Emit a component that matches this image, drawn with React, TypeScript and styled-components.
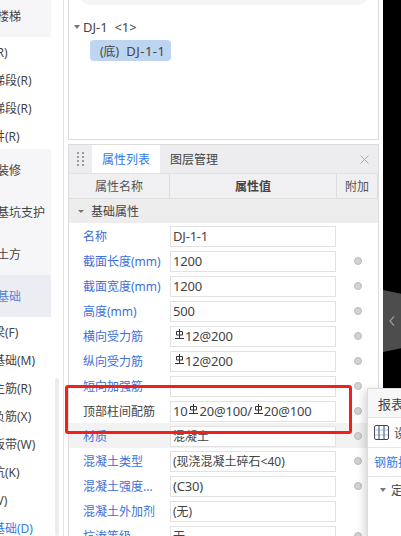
import React from "react";
import styled, { createGlobalStyle } from "styled-components";

const Global = createGlobalStyle`
  html, body { margin: 0; padding: 0; background: #000; }
  #root { width: 401px; height: 536px; overflow: hidden; }
  * { box-sizing: border-box; }
`;

const FONT = `"Noto Sans", "Noto Sans CJK SC", sans-serif`;

const Page = styled.div`
  position: relative;
  display: flex;
  width: 401px;
  height: 536px;
  overflow: hidden;
  font-family: ${FONT};
  font-size: 12px;
  color: #333;
  background: #000;
`;

const Workspace = styled.div`
  display: flex;
  width: 383px;
  height: 536px;
  background: #fff;
`;

const Sidebar = styled.nav`
  position: relative;
  width: 64px;
  flex: none;
  border-right: 1px solid #e4e4e4;
  overflow: hidden;
`;

const Group = styled.div<{ $h: number; $active?: boolean; $raised?: boolean }>`
  width: 51px;
  height: ${(p) => p.$h}px;
  padding: 0 0 ${(p) => (p.$raised ? 5 : 0)}px 0;
  display: flex;
  align-items: center;
  white-space: nowrap;
  background: ${(p) => (p.$active ? "#ecedf2" : "#f6f6f8")};
  color: ${(p) => (p.$active ? "#4f86dd" : "#444")};
`;

const GroupLabel = styled.span`
  margin-left: -3px;
`;

const SubItem = styled.div<{ $active?: boolean }>`
  height: 28px;
  padding-top: 1px;
  display: flex;
  align-items: center;
  white-space: nowrap;
  color: ${(p) => (p.$active ? "#2f7bea" : "#444")};
`;

const SubLabel = styled.span`
  margin-left: -31px;
`;

const ScrollThumb = styled.div`
  position: absolute;
  left: 55px;
  top: 378px;
  width: 4px;
  height: 158px;
  background: #ececec;
  border-radius: 2px;
`;

const Main = styled.div`
  display: flex;
  flex-direction: column;
  gap: 4px;
  padding-left: 4px;
  width: 319px;
  flex: none;
`;

const TreePanel = styled.section`
  position: relative;
  height: 140px;
  flex: none;
  width: 311px;
  border: 1px solid #dcdcdc;
  border-top: 0;
  padding: 0 0 0 5px;
`;

const TopBar = styled.div`
  position: absolute;
  left: 11px;
  right: 10px;
  top: -10px;
  height: 15px;
  background: #f4f4f4;
  border-radius: 0 0 10px 10px;
`;

const TreeRow = styled.div`
  display: flex;
  align-items: center;
  gap: 3px;
  height: 20px;
  margin-top: 17px;
  font-size: 13px;
  color: #444;
`;

const Caret = styled.span<{ $size?: number }>`
  width: 0;
  height: 0;
  border-left: ${(p) => p.$size ?? 3.5}px solid transparent;
  border-right: ${(p) => p.$size ?? 3.5}px solid transparent;
  border-top: ${(p) => p.$size ?? 4}px solid #777;
  flex: none;
`;

const TreeChip = styled.div`
  margin: 3px 0 0 16px;
  width: 81px;
  height: 21px;
  display: flex;
  align-items: center;
  gap: 7px;
  padding-left: 10px;
  background: #bdd5f0;
  border-radius: 4px;
  color: #444;
  white-space: nowrap;
`;

const ChipCode = styled.span`
  font-size: 13px;
  letter-spacing: 0.5px;
`;

const PropPanel = styled.section`
  flex: 1;
  width: 311px;
  border: 1px solid #dcdcdc;
  border-bottom: 0;
  overflow: hidden;
`;

const TabBar = styled.div`
  height: 29px;
  display: flex;
  align-items: stretch;
  background: #ededef;
  border-bottom: 1px solid #e2e2e2;
`;

const Grip = styled.div`
  width: 23px;
  display: flex;
  align-items: center;
  justify-content: center;
`;

const Tab = styled.div<{ $active?: boolean }>`
  width: 68px;
  height: 28px;
  display: flex;
  align-items: center;
  justify-content: center;
  color: ${(p) => (p.$active ? "#2f7bea" : "#444")};
  background: ${(p) => (p.$active ? "#fff" : "transparent")};
`;

const Spacer = styled.div`
  flex: 1;
`;

const CloseBtn = styled.div`
  width: 28px;
  display: flex;
  align-items: center;
  justify-content: center;
`;

const HeadRow = styled.div`
  display: grid;
  grid-template-columns: 101px 167px 41px;
  height: 25px;
  background: #f0f0f2;
  border-bottom: 1px solid #dfdfdf;
`;

const HeadCell = styled.div<{ $bold?: boolean }>`
  display: flex;
  align-items: center;
  justify-content: center;
  border-right: 1px solid #dcdcdc;
  font-weight: ${(p) => (p.$bold ? 700 : 400)};
  color: ${(p) => (p.$bold ? "#444" : "#555")};
`;

const SectionRow = styled.div`
  height: 24px;
  display: flex;
  align-items: center;
  gap: 7px;
  padding-left: 9px;
  background: #ededed;
  color: #444;
`;

const Row = styled.div<{ $shade?: boolean }>`
  display: grid;
  grid-template-columns: 101px 166px 43px;
  align-items: center;
  height: 25px;
  padding-top: 1px;
  background: ${(p) => (p.$shade ? "#f2f2f2" : "transparent")};
`;

const Label = styled.div<{ $plain?: boolean }>`
  padding-left: 14px;
  color: ${(p) => (p.$plain ? "#444" : "#3d6fd9")};
  white-space: nowrap;
  overflow: hidden;
`;

const Value = styled.div<{ $cjk?: boolean }>`
  height: 21px;
  display: flex;
  align-items: center;
  padding-left: 2px;
  border: 1px solid #e2e2e2;
  background: #fff;
  color: #444;
  font-size: ${(p) => (p.$cjk ? 12 : 13)}px;
  letter-spacing: ${(p) => (p.$cjk ? 0 : -0.2)}px;
  white-space: nowrap;
  overflow: hidden;
`;

const Radio = styled.span`
  justify-self: center;
  width: 8px;
  height: 8px;
  border-radius: 50%;
  background: #d2d2d4;
  border: 1px solid #bcbcbf;
`;

const Annotation = styled.div`
  position: absolute;
  left: 65px;
  top: 385px;
  width: 287px;
  height: 49px;
  border: 3px solid #f31f1c;
  border-radius: 3px;
`;

const Handle = styled.div`
  position: absolute;
  left: 383px;
  top: 290px;
  width: 18px;
  height: 62px;
  background: #4d4d4d;
  clip-path: polygon(0 0, 100% 6%, 100% 94%, 0 100%);
  display: flex;
  align-items: center;
  justify-content: center;
`;

const Floating = styled.aside`
  position: absolute;
  left: 367px;
  top: 388px;
  width: 40px;
  height: 151px;
  background: #fff;
  border: 1px solid #dcdcdc;
  box-shadow: -3px 2px 8px rgba(0, 0, 0, 0.16);
  overflow: hidden;
`;

const FloatTitle = styled.div`
  height: 29px;
  display: flex;
  align-items: center;
  padding-left: 10px;
  font-size: 13px;
  background: #f7f7f7;
  color: #444;
  white-space: nowrap;
  border-bottom: 1px solid #e4e4e4;
`;

const FloatTool = styled.div`
  height: 30px;
  display: flex;
  align-items: center;
  gap: 5px;
  padding-left: 6px;
  white-space: nowrap;
  color: #444;
  border-bottom: 1px solid #e8e8e8;
`;

const FloatTab = styled.div`
  height: 29px;
  display: flex;
  align-items: center;
  padding-left: 6px;
  color: #2f7bea;
  white-space: nowrap;
  border-bottom: 1px solid #e4e4e4;
`;

const FloatTree = styled.div`
  display: flex;
  align-items: center;
  gap: 5px;
  height: 26px;
  padding-left: 12px;
  white-space: nowrap;
  color: #444;
`;

const FloatIcon = styled.svg`
  width: 15px;
  height: 15px;
  flex: none;
`;

const Steel = styled.svg`
  width: 9px;
  height: 10px;
  flex: none;
  margin: 0 1px 4px 2px;
`;

const SteelMark = () => (
  <Steel viewBox="0 0 9 10" fill="none" stroke="#333" strokeWidth="1">
    <path d="M1.5 2.5h6v3.5h-6zM4.5 0v9M0 9.5h9" />
  </Steel>
);

const rows: { l: string; v: React.ReactNode; plain?: boolean; shade?: boolean; radio?: boolean; cjk?: boolean }[] = [
  { l: "名称", v: "DJ-1-1" },
  { l: "截面长度(mm)", v: "1200", radio: true },
  { l: "截面宽度(mm)", v: "1200", radio: true },
  { l: "高度(mm)", v: "500", radio: true },
  { l: "横向受力筋", v: <><SteelMark />12@200</>, radio: true },
  { l: "纵向受力筋", v: <><SteelMark />12@200</>, radio: true },
  { l: "短向加强筋", v: "", radio: true },
  { l: "顶部柱间配筋", v: <>10<SteelMark />20@100/<SteelMark />20@100</>, plain: true, radio: true },
  { l: "材质", v: "混凝土", shade: true, radio: true, cjk: true },
  { l: "混凝土类型", v: "(现浇混凝土碎石<40)", radio: true, cjk: true },
  { l: "混凝土强度...", v: "(C30)", radio: true },
  { l: "混凝土外加剂", v: "(无)", cjk: true },
  { l: "抗渗等级", v: "无", radio: true, cjk: true },
];

export default function App() {
  return (
    <Page>
      <Global />
      <Workspace>
        <Sidebar>
          <Group $h={37} $raised><GroupLabel>楼梯</GroupLabel></Group>
          <SubItem><SubLabel>楼梯(R)</SubLabel></SubItem>
          <SubItem><SubLabel>直形梯段(R)</SubLabel></SubItem>
          <SubItem><SubLabel>螺旋梯段(R)</SubLabel></SubItem>
          <SubItem><SubLabel>楼梯井(R)</SubLabel></SubItem>
          <Group $h={42}><GroupLabel>装修</GroupLabel></Group>
          <Group $h={42}><GroupLabel>基坑支护</GroupLabel></Group>
          <Group $h={42}><GroupLabel>土方</GroupLabel></Group>
          <Group $h={42} $active><GroupLabel>基础</GroupLabel></Group>
          <SubItem><SubLabel>基础梁(F)</SubLabel></SubItem>
          <SubItem><SubLabel>筏板基础(M)</SubLabel></SubItem>
          <SubItem><SubLabel>筏板主筋(R)</SubLabel></SubItem>
          <SubItem><SubLabel>筏板负筋(X)</SubLabel></SubItem>
          <SubItem><SubLabel>基础板带(W)</SubLabel></SubItem>
          <SubItem><SubLabel>集水坑(K)</SubLabel></SubItem>
          <SubItem><SubLabel>柱墩(V)</SubLabel></SubItem>
          <SubItem $active><SubLabel>独立基础(D)</SubLabel></SubItem>
          <ScrollThumb />
        </Sidebar>
        <Main>
          <TreePanel>
            <TopBar />
            <TreeRow><Caret /> DJ-1&nbsp;&nbsp;&lt;1&gt;</TreeRow>
            <TreeChip>(底)<ChipCode>DJ-1-1</ChipCode></TreeChip>
          </TreePanel>
          <PropPanel>
            <TabBar>
              <Grip>
                <svg width="7" height="14" viewBox="0 0 7 14" fill="#999">
                  <rect x="0" y="0" width="2" height="2" /><rect x="5" y="0" width="2" height="2" />
                  <rect x="0" y="4" width="2" height="2" /><rect x="5" y="4" width="2" height="2" />
                  <rect x="0" y="8" width="2" height="2" /><rect x="5" y="8" width="2" height="2" />
                  <rect x="0" y="12" width="2" height="2" /><rect x="5" y="12" width="2" height="2" />
                </svg>
              </Grip>
              <Tab $active>属性列表</Tab>
              <Tab>图层管理</Tab>
              <Spacer />
              <CloseBtn>
                <svg width="9" height="9" viewBox="0 0 9 9" stroke="#aaa" strokeWidth="1">
                  <path d="M0.5 0.5l8 8M8.5 0.5l-8 8" />
                </svg>
              </CloseBtn>
            </TabBar>
            <HeadRow>
              <HeadCell>属性名称</HeadCell>
              <HeadCell $bold>属性值</HeadCell>
              <HeadCell>附加</HeadCell>
            </HeadRow>
            <SectionRow><Caret $size={3} />基础属性</SectionRow>
            {rows.map((r) => (
              <Row key={r.l} $shade={r.shade}>
                <Label $plain={r.plain}>{r.l}</Label>
                <Value $cjk={r.cjk}>{r.v}</Value>
                {r.radio ? <Radio /> : <span />}
              </Row>
            ))}
          </PropPanel>
        </Main>
      </Workspace>
      <Handle>
        <svg width="6" height="10" viewBox="0 0 6 10" fill="none" stroke="#999" strokeWidth="1.2">
          <path d="M5 0.5L1 5l4 4.5" />
        </svg>
      </Handle>
      <Annotation />
      <Floating>
        <FloatTitle>报表</FloatTitle>
        <FloatTool>
          <FloatIcon viewBox="0 0 15 15" fill="none" stroke="#445" strokeWidth="1">
            <rect x="0.5" y="0.5" width="14" height="14" rx="1.5" />
            <path d="M5 .5v14M10 .5v14" />
            <path d="M.5 5h14M.5 10h14" stroke="#3b82f6" strokeDasharray="1 1" />
          </FloatIcon>
          设置
        </FloatTool>
        <FloatTab>钢筋排布</FloatTab>
        <FloatTree><Caret />定</FloatTree>
      </Floating>
    </Page>
  );
}
